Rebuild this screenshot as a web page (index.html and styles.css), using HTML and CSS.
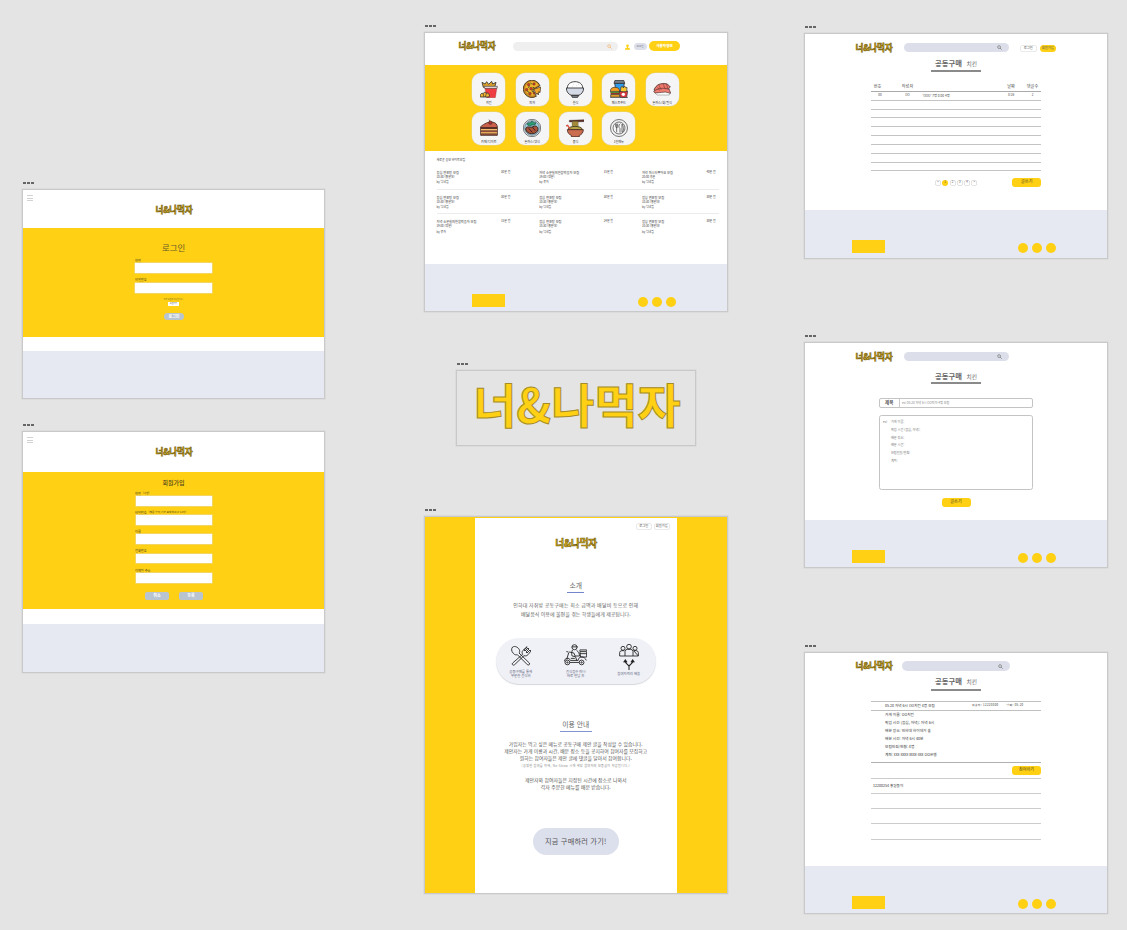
FILE: index.html
```html
<!DOCTYPE html>
<html lang="ko">
<head>
<meta charset="utf-8">
<title>너&amp;나먹자</title>
<link rel="stylesheet" href="styles.css">
</head>
<body>
<svg class="defs" aria-hidden="true">
  <symbol id="search" viewBox="0 0 12 12"><circle cx="5" cy="5" r="3.4" fill="none" stroke="currentColor" stroke-width="1.7"/><path d="M7.5 7.5 11 11" stroke="currentColor" stroke-width="2"/></symbol>
</svg>
<main class="canvas">

<section class="frame frame-login">
  <div class="dots"><i></i><i></i><i></i></div>
  <div class="board">
    <header class="auth-head"><div class="burger"><i></i><i></i><i></i></div><div class="logo">너&amp;나먹자</div></header>
    <form class="auth login">
      <h2 class="login-title">로그인</h2>
      <label>학번</label><div class="field"></div>
      <label>비밀번호</label><div class="field"></div>
      <p class="ask">아직 회원이 아니신가요?</p>
      <div class="join">회원가입</div>
      <div class="btn-grey">로그인</div>
    </form>
    <footer class="plain-foot"></footer>
  </div>
</section>

<section class="frame frame-signup">
  <div class="dots"><i></i><i></i><i></i></div>
  <div class="board">
    <header class="auth-head"><div class="burger"><i></i><i></i><i></i></div><div class="logo">너&amp;나먹자</div></header>
    <form class="auth signup">
      <h2 class="signup-title">회원가입</h2>
      <label>학번 <small>(사번)</small></label><div class="field"></div>
      <label>비밀번호 <small>(영문 숫자,기호 포함하여 8-12자)</small></label><div class="field"></div>
      <label>이름</label><div class="field"></div>
      <label>전화번호</label><div class="field"></div>
      <label class="mail">이메일 주소</label><div class="field"></div>
      <div class="actions"><div class="btn-grey">취소</div><div class="btn-grey">등록</div></div>
    </form>
    <footer class="plain-foot"></footer>
  </div>
</section>

<section class="frame frame-home">
  <div class="dots"><i></i><i></i><i></i></div>
  <div class="board">
    <header class="home-head">
      <div class="logo">너&amp;나먹자</div>
      <div class="search"><svg><use href="#search"/></svg></div>
      <svg class="user" viewBox="0 0 12 13"><circle cx="6" cy="3.4" r="3.2"/><path d="M4.5 6h3v2.4L12 10v3H0v-3l4.500-1.600z"/></svg>
      <div class="home-pill">로그인</div>
      <div class="home-cta">사용자정보</div>
    </header>
    <div class="menu">
      <div class="card"><svg viewBox="0 0 54 54"><path d="M10 22 6 7l9 5 5-7 6 8 9-9 3 8 10-5-4 15z" fill="#d9a02c" stroke="#333" stroke-width="2.500"/><path d="M14 21h37l-5 32H20z" fill="#ee3d43" stroke="#8d2d30"/><path d="M12 19h40l-1 6H14z" fill="#f7e9e4" stroke="#444" stroke-width="2"/><path d="M1 51c-2-9 4-13 9-10 2-6 8-5 8-1 6-3 13 3 9 11z" fill="#f4b632" stroke="#333" stroke-width="2.500"/><path d="m9 41 3 10m7-11-3 11" stroke="#333" stroke-width="2"/></svg><span>치킨</span></div>
      <div class="card"><svg viewBox="0 0 54 54"><path d="M51 17A26 26 0 1 0 40 49L29 29z" fill="#c88a22" stroke="#3b2b16" stroke-width="2.500"/><path d="M46 15A21 21 0 1 0 35 45L26 27z" fill="#f3b52b"/><path d="m32 28 21-7-2 17-4-3-1 10-4-6-2 4z" fill="#efa829" stroke="#3b2b16" stroke-width="2"/><g fill="#c43a2c" stroke="#453016"><circle cx="17" cy="14" r="4"/><circle cx="33" cy="12" r="4"/><circle cx="11" cy="29" r="4"/><circle cx="24" cy="26" r="4"/><circle cx="21" cy="41" r="4"/><circle cx="33" cy="40" r="3"/></g><path d="m23 8 3 5m-11 9 5-2m-7 14 5 3m11-15 5 1m-8 9 4 5" stroke="#38602b" stroke-width="3"/></svg><span>피자</span></div>
      <div class="card"><svg viewBox="0 0 54 54"><path d="M4 24C4 12 14 5 27 5s23 7 23 19" fill="#fff" stroke="#252525" stroke-width="2.500"/><path d="M1 24h52c0 12-7 19-15 22H16C8 43 1 36 1 24z" fill="#d5dae7" stroke="#252525" stroke-width="2.500"/><path d="M16 46h22l-3 6H19z" fill="#858b96" stroke="#252525" stroke-width="2.500"/><path d="M22 13h1m7 4h1m-13 3h1m17-7h1" stroke="#777" stroke-width="2"/></svg><span>한식</span></div>
      <div class="card"><svg viewBox="0 0 54 54"><path d="M14 9h29l-4 26H18z" fill="#2f9cec" stroke="#333" stroke-width="2.500"/><path d="M15 1h26l3 9H12z" fill="#76808c" stroke="#333" stroke-width="2.500"/><path d="M1 35c0-10 5-13 14-13s14 4 14 13z" fill="#f59c22" stroke="#333" stroke-width="2"/><path d="M2 34h27v5H2z" fill="#5c9a3d" stroke="#333"/><path d="M2 39h27v5H2z" fill="#92312a"/><path d="M2 44h27v7H2z" fill="#f3aa29" stroke="#333" stroke-width="2"/><path d="m31 35 2-14 4-2 3 5 4-6 3 5 4-1-1 14z" fill="#ffc830" stroke="#333" stroke-width="2"/><path d="M28 33c6 4 17 4 25 0l-3 19H31z" fill="#e33940" stroke="#333" stroke-width="2"/><circle cx="40" cy="43" r="5" fill="#fff"/><path d="M0 53h54" stroke="#333" stroke-width="2"/></svg><span>패스트푸드</span></div>
      <div class="card"><svg viewBox="0 0 54 54"><path d="M5 38c7-8 34-9 46 0l-2 7H12z" fill="#fff" stroke="#999" stroke-width="2"/><path d="M3 30C9 13 24 8 43 12l9 9-8 8-22 3-10 5z" fill="#ee766b" stroke="#4c3434" stroke-width="2.500"/><path d="M2 34c12-9 29-12 47-6l4 12-16-4-31 3z" fill="#f17c70" stroke="#4c3434" stroke-width="2"/><path d="m18 16 7 14m5-19 7 17m3-17 5 17m-31-6 6 10" stroke="#863f3b" stroke-width="2"/></svg><span>돈까스/회/일식</span></div>
      <div class="card"><svg viewBox="0 0 54 54"><path d="M2 23C13 13 26 8 36 9c10 1 16 7 16 15v25H2z" fill="#c9604c" stroke="#422a23" stroke-width="2.500"/><path d="M2 24h50v6H2z" fill="#5a3026"/><path d="M3 30h48v5H3z" fill="#f3bd70"/><path d="M3 39h48v6H3z" fill="#e8aa58"/><path d="M3 36h48m-48 9h48" stroke="#55342a" stroke-width="3"/><circle cx="31" cy="11" r="5" fill="#b82e37" stroke="#422a23" stroke-width="2"/><path d="m30 7-3-5" stroke="#333" stroke-width="2"/></svg><span>카페/디저트</span></div>
      <div class="card"><svg viewBox="0 0 54 54"><circle cx="27" cy="27" r="26" fill="#eef4f6" stroke="#353c40" stroke-width="2"/><circle cx="27" cy="27" r="22" fill="#9fd1e5" stroke="#50626a" stroke-width="2"/><path d="M8 30c3-12 14-2 22-7 10-6 19 3 13 13-6 12-32 12-35-6z" fill="#a85339" stroke="#39251f" stroke-width="3"/><path d="m17 28 11 12m0-16 9 11" stroke="#44241c" stroke-width="3"/><path d="M12 16c3-9 10-1 12-8 5-3 8 5 14 3 2 7-6 8-11 7-5 5-12 2-15-2z" fill="#2c9b72" stroke="#244c3d" stroke-width="2"/></svg><span>돈까스/양식</span></div>
      <div class="card"><svg viewBox="0 0 54 54"><path d="M10 4 54 2v6L10 9z" fill="#5d302c" stroke="#352321"/><path d="M19 7h17v27H19z" fill="#c0a041" stroke="#594e27" stroke-width="2"/><path d="M24 7v24m6-24v24" stroke="#69602f" stroke-width="2"/><path d="M6 32c0-13 43-13 43 0z" fill="#b7a247" stroke="#4d4927" stroke-width="3"/><path d="m0 21 5-2 8 13" fill="none" stroke="#d74c3c" stroke-width="4"/><path d="M4 32h48c0 10-7 16-12 17v4H16v-4C9 46 4 41 4 32z" fill="#c96c50" stroke="#4c2a23" stroke-width="2.500"/></svg><span>중식</span></div>
      <div class="card"><svg viewBox="0 0 54 54" fill="none" stroke="#333" stroke-width="2"><circle cx="27" cy="27" r="25.500"/><circle cx="27" cy="27" r="18"/><path d="M17 14v9c0 4 6 4 6 0v-9m-3 0v26m11-26c-6 3-5 13-1 15v12m6-26v25c6 0 5-20 0-25z" fill="#fff"/></svg><span>1인메뉴</span></div>
    </div>
    <div class="list">
      <h3>새로운 공모 바이트모임</h3>
      <div class="posts">
        <article><b>점심 연포탕 모집</b><em>30분 전</em><p>10:30 (홍문대)</p><p>by 닉네임</p></article>
        <article><b>저녁 소분실의한참먹을자 모집</b><em>15분 전</em><p>19:00 (정문)</p><p>by 유저</p></article>
        <article><b>저녁 파스타좋아요 모집</b><em>40분 전</em><p>20:00 후문</p><p>by 닉네임</p></article>
      </div>
      <div class="posts">
        <article><b>점심 연포탕 모집</b><em>30분 전</em><p>10:30 (홍문대)</p><p>by 닉네임</p></article>
        <article><b>점심 연포탕 모집</b><em>30분 전</em><p>10:30 (홍문대)</p><p>by 닉네임</p></article>
        <article><b>점심 연포탕 모집</b><em>30분 전</em><p>10:30 (홍문대)</p><p>by 닉네임</p></article>
      </div>
      <div class="posts last">
        <article><b>저녁 소분실의한참먹을자 모집</b><em>15분 전</em><p>19:00 (정문)</p><p>by 유저</p></article>
        <article><b>점심 연포탕 모집</b><em>24분 전</em><p>10:30 (홍문대)</p><p>by 닉네임</p></article>
        <article><b>점심 연포탕 모집</b><em>30분 전</em><p>10:30 (홍문대)</p><p>by 닉네임</p></article>
      </div>
    </div>
    <footer class="foot"><div class="box"></div><i></i><i></i><i></i></footer>
  </div>
</section>

<section class="frame frame-logo">
  <div class="dots"><i></i><i></i><i></i></div>
  <div class="board"><div class="big-logo">너&amp;나먹자</div></div>
</section>

<section class="frame frame-intro">
  <div class="dots"><i></i><i></i><i></i></div>
  <div class="board">
    <div class="intro">
      <div class="intro-nav"><span>로그인</span><span>회원가입</span></div>
      <div class="logo intro-logo">너&amp;나먹자</div>
      <h2 class="about">소개</h2>
      <p class="lead">인하대 자취방 공동구매는 최소 금액과 배달비 등으로 인해</p>
      <p class="lead lead-two">배달음식 이용에 불편을 겪는 학생들에게 제공됩니다.</p>
      <div class="features">
        <div><svg viewBox="0 0 60 60" fill="none" stroke="#222" stroke-width="2.600"><path d="M5 3c6-4 16 0 20 8 2 5 1 8-1 10l31 30c3 4-2 8-6 5L19 26c-4 1-8 1-12-4C1 16 0 8 5 3z"/><path d="m48 2-12 11c-4 4-3 8-1 12L5 51c-4 4 2 9 6 5l28-27c5 2 9 0 12-3l9-11-3-3-9 9-3-3 9-9-3-3-9 9-3-3 9-8z"/></svg><p>공동구매를 통해<br>무분한 음식비</p></div>
        <div><svg class="moto" viewBox="0 0 68 64" fill="none" stroke="#222" stroke-width="2.600"><circle cx="31" cy="9" r="7.500"/><path d="M23 8h18M25 17c-3 7-3 13-1 18l10 2 4 12m-1-31c7 5 8 9 9 17H33l-4-9-14-3M13 23l-6-1m7 3L8 45m-7 6c1-11 14-13 18-3h23c0-11 14-14 21-5l3 5M20 42h12m15-20h20v16H49zm0 6h20m-20-8v-3h20v3"/><circle cx="10" cy="54" r="7"/><circle cx="10" cy="54" r="2"/><circle cx="52" cy="54" r="7"/><circle cx="52" cy="54" r="2"/><path d="M17 54h28"/></svg><p>음식점수 떠나<br>바로 반납 후</p></div>
        <div><svg class="group" viewBox="0 0 60 78" fill="none" stroke="#222" stroke-width="2.600"><circle cx="12" cy="13" r="6"/><circle cx="30" cy="8" r="7"/><circle cx="48" cy="13" r="6"/><path d="M2 36V25q1-5 7-5h7m28 0h8q6 1 6 6v10zM18 36V22q1-6 7-6h10q6 0 7 6v14M2 36h56"/><path d="M30 78V66L19 55v-5m11 16 11-11v-5m-27 5 5-7 5 7m12 0 5-7 5 7" stroke-width="3.200"/></svg><p>참여자끼리 배송</p></div>
      </div>
      <h2 class="guide">이용 안내</h2>
      <p class="info i1">가입자는 먹고 싶은 메뉴로 공동구매 제안 글을 작성할 수 있습니다.</p>
      <p class="info i2">제안자는 가게 이름과 시간, 배분 장소 등을 공지하여 참여자를 모집하고</p>
      <p class="info i3">원하는 참여자들은 제안 글에 댓글을 달아서 참여합니다.</p>
      <p class="info note">(공정한 참여를 위해, No-Show 시에 해당 참여자의 보증금이 차감됩니다.)</p>
      <p class="info i4">제안자와 참여자들은 지정된 시간에 장소로 나와서</p>
      <p class="info i5">각자 주문한 메뉴를 배분 받습니다.</p>
      <div class="go">지금 구매하러 가기!</div>
    </div>
  </div>
</section>

<section class="frame frame-board">
  <div class="dots"><i></i><i></i><i></i></div>
  <div class="board shop">
    <header class="shop-head"><div class="logo">너&amp;나먹자</div><div class="search"><svg><use href="#search"/></svg></div><div class="nav"><span>로그인</span><span>회원가입</span></div></header>
    <h2 class="shop-title">공동구매<small>치킨</small></h2>
    <div class="table">
      <div class="tr th"><span>번호</span><span>작성자</span><span></span><span>날짜</span><span>댓글수</span></div>
      <div class="tr"><span>00</span><span>OO</span><span class="left">'OOO' 7명 0:00 4명</span><span>8/26</span><span>2</span></div>
      <div class="tr"></div><div class="tr"></div><div class="tr"></div><div class="tr"></div><div class="tr"></div><div class="tr"></div><div class="tr"></div><div class="tr"></div>
    </div>
    <div class="pager"><div class="pages"><span>&lt;</span><span class="on">1</span><span>2</span><span>3</span><span>4</span><span>&gt;</span></div><div class="btn">글쓰기</div></div>
    <footer class="foot"><div class="box"></div><i></i><i></i><i></i></footer>
  </div>
</section>

<section class="frame frame-write">
  <div class="dots"><i></i><i></i><i></i></div>
  <div class="board shop">
    <header class="shop-head"><div class="logo">너&amp;나먹자</div><div class="search"><svg><use href="#search"/></svg></div></header>
    <h2 class="shop-title">공동구매<small>치킨</small></h2>
    <div class="subject"><b>제목</b><span>ex) 05.20 저녁 6시 OO피자 4명 모집</span></div>
    <div class="body-box"><span>ex)</span><div><p>가게 이름:</p><p>픽업 시간 (점심, 저녁):</p><p>배분 장소:</p><p>배분 시간:</p><p>모집인원/현황:</p><p>계좌:</p></div></div>
    <div class="btn center">글쓰기</div>
    <footer class="foot"><div class="box"></div><i></i><i></i><i></i></footer>
  </div>
</section>

<section class="frame frame-detail">
  <div class="dots"><i></i><i></i><i></i></div>
  <div class="board shop">
    <header class="shop-head"><div class="logo">너&amp;나먹자</div><div class="search"><svg><use href="#search"/></svg></div></header>
    <h2 class="shop-title">공동구매<small>치킨</small></h2>
    <div class="post">
      <div class="post-head"><b>05.20 저녁 6시 OO치킨 4명 모집</b><span>작성자: 12220000</span><span>날짜: 05.20</span></div>
      <div class="post-body"><p>가게 이름: OO치킨</p><p>픽업 시간 (점심, 저녁): 저녁 6시</p><p>배분 장소: 인하대 하이데거 숲</p><p>배분 시간: 저녁 6시 40분</p><p>모집인원/현황: 4명</p><p>계좌: xxx-xxxx-xxxx-xxx OO은행</p></div>
      <div class="join-row"><div class="btn">참여하기</div></div>
      <div class="comment">12200254 홍길동이</div><div class="comment"></div><div class="comment"></div><div class="comment"></div>
    </div>
    <footer class="foot"><div class="box"></div><i></i><i></i><i></i></footer>
  </div>
</section>

</main>
</body>
</html>
```
FILE: styles.css
```css
* { box-sizing: border-box; }
body { margin: 0; background: #e4e4e4; font-family: "Noto Sans CJK KR", "Noto Sans", sans-serif; color: #555; }
h2, h3, p { margin: 0; font-weight: 400; }
i, em { font-style: normal; }
span, p, h2, h3, b, label { white-space: nowrap; }
.defs { position: absolute; width: 0; height: 0; }
.canvas { position: relative; width: 1127px; height: 930px; overflow: hidden; }

/* artboards placed on the free canvas */
.frame { position: absolute; display: flex; flex-direction: column; }
.frame-login { left: 22px; top: 182px; width: 303px; height: 217px; }
.frame-signup { left: 22px; top: 424px; width: 303px; height: 249px; }
.frame-home { left: 424px; top: 25px; width: 304px; height: 287px; }
.frame-logo { left: 456px; top: 363px; width: 240px; height: 83px; }
.frame-intro { left: 424px; top: 509px; width: 304px; height: 385px; }
.frame-board { left: 804px; top: 26px; width: 304px; height: 233px; }
.frame-write { left: 804px; top: 335px; width: 304px; height: 233px; }
.frame-detail { left: 804px; top: 645px; width: 304px; height: 269px; }
.dots { display: flex; gap: 1px; height: 7px; padding-left: 1px; }
.dots i { width: 3px; height: 2px; background: #666; }
.board { flex: 1; display: flex; flex-direction: column; border: 1px solid #c9c9c9; background: #fff; box-shadow: 0 0 0 .5px #d4d4d4; min-height: 0; }

.logo { width: 37px; height: 12px; line-height: 10.600px; font-size: 8.600px; font-weight: 700; letter-spacing: -.2px; color: #ecc012; -webkit-text-stroke: .6px #6f5a10; white-space: nowrap; }

/* login and signup */
.auth-head { height: 38px; display: flex; align-items: flex-start; padding: 5px 0 0 4px; }
.frame-signup .auth-head { height: 40px; }
.burger { width: 6px; display: flex; flex-direction: column; gap: 1px; }
.burger i { height: 1px; background: #d2d2d2; margin-bottom: .6px; }
.auth-head .logo { margin: 9px 0 0 122.500px; }
.auth { background: #ffd014; display: flex; flex-direction: column; padding-left: 112px; }
.login { height: 109px; }
.login-title { height: 12px; line-height: 12px; margin: 13px 0 1.500px 27px; font-size: 8.400px; color: #665a2b; }
.auth label { height: 4px; line-height: 4px; font-size: 3.200px; color: #55491d; }
.login label { margin-top: 4px; }
.login .field + label { margin-top: 5px; }
.field { width: 77px; height: 10px; background: #fff; box-shadow: 0 0 0 .5px #e5dab0; margin-top: .5px; }
.ask { width: 77px; margin-top: 5px; height: 3px; line-height: 3px; font-size: 1.900px; text-align: center; color: #6b5d25; }
.join { width: 11px; height: 4px; line-height: 4px; margin: 1px 0 0 33px; background: #fff; font-size: 2px; text-align: center; }
.btn-grey { background: #b8c4d0; color: #fff; font-weight: 700; text-align: center; border-radius: 4px; }
.login .btn-grey { width: 20px; height: 7px; line-height: 6.500px; margin: 7px 0 0 29px; font-size: 4px; }
.plain-foot { background: #e6e9f2; flex: 1; margin-top: 14px; }
.signup { height: 137px; }
.signup-title { height: 10px; line-height: 10px; margin: 5.500px 0 0 27.500px; font-size: 6px; font-weight: 500; color: #51471d; }
.signup label { margin-top: 4.600px; height: 4px; line-height: 4px; }
.signup .signup-title + label { margin-top: 3.700px; }
.signup label small { font-size: 2.700px; vertical-align: .6px; margin-left: 1px; }
.signup .mail { margin-top: 5.200px; }
.signup .mail + .field { margin-top: .7px; }
.signup .field { width: 76px; margin-left: .5px; height: 9.800px; margin-top: .8px; }
.actions { display: flex; gap: 10px; margin: 8.700px 0 0 10px; }
.signup .btn-grey { width: 24px; height: 8px; line-height: 7.500px; font-size: 4px; border-radius: 2px; }
.frame-signup .plain-foot { margin-top: 15px; }

/* home */
.home-head { height: 32px; display: flex; align-items: flex-start; padding: 7px 0 0 33.500px; }
.search { display: flex; align-items: center; justify-content: flex-end; height: 9px; border-radius: 5px; background: #dcdfea; color: #777; }
.search svg { width: 5px; height: 5px; }
.home-head .search { width: 105px; background: #efefef; color: #f5b675; margin: 1.500px 0 0 17.500px; padding-right: 6px; }
.user { width: 5px; height: 6px; fill: #ffd014; margin: 3.500px 0 0 7px; }
.home-pill { width: 13px; height: 7px; line-height: 6.500px; border-radius: 4px; margin: 3px 0 0 3.500px; background: #dcdfea; font-size: 2.500px; text-align: center; }
.home-cta { width: 31px; height: 10px; line-height: 9.500px; border-radius: 5px; margin: 1px 0 0 2.500px; background: #ffd014; color: #fff; font-size: 3.600px; font-weight: 900; text-align: center; }
.menu { height: 86px; background: #ffd014; display: grid; grid-template-columns: repeat(5, 33px); gap: 6px 10.350px; padding: 8px 0 0 47.300px; align-content: start; }
.card { height: 33px; border-radius: 9px; background: #f5f5f5; box-shadow: 0 0 0 .5px #e3d28c; display: flex; flex-direction: column; align-items: center; }
.card svg { width: 18px; height: 18px; margin-top: 7px; }
.card span { height: 5px; line-height: 5px; margin-top: 2px; font-size: 3.100px; color: #333; }
.list { height: 113px; padding: 7px 0 0 11.500px; color: #3c3c3c; }
.list h3 { height: 5px; line-height: 5px; font-size: 2.950px; }
.posts { width: 282px; display: grid; grid-template-columns: repeat(3, 102.700px); height: 24.500px; padding-top: 0; border-bottom: 1px solid #ececec; }
.list h3 + .posts { margin-top: 7px; height: 19.500px; }
.posts:nth-of-type(2) { padding-top: 5.500px; }
.posts.last { padding-top: 5px; border: 0; }
.posts article { display: grid; grid-template-columns: 64.500px 1fr; grid-template-rows: 5px 5px 5.500px; line-height: 5px; }
.posts.last article { grid-template-rows: 5px 6px 6px; }
.posts b, .posts em { font-weight: 400; font-size: 3.200px; white-space: nowrap; }
.posts em { font-size: 2.900px; }
.posts p { grid-column: 1 / 3; font-size: 2.900px; line-height: 5.500px; }
.foot { flex: 1; background: #e6e9f2; display: flex; padding: 30px 0 0 47px; }
.foot .box { width: 33px; height: 13px; background: #ffd014; margin-right: 133.300px; }
.foot i { width: 10px; height: 10px; border-radius: 50%; background: #ffd014; margin: 3px 3.800px 0 0; }

/* wordmark */
.frame-logo .board { background: transparent; align-items: center; }
.big-logo { margin-left: 2px; font-size: 47px; line-height: 63px; font-weight: 700; color: #ffd014; -webkit-text-stroke: 1px #a58c27; white-space: nowrap; }

/* introduction */
.frame-intro .board { background: #ffd014; }
.intro { width: 201.500px; height: 375px; margin: 1px 0 0 50px; background: #fff; display: flex; flex-direction: column; align-items: center; }
.intro-nav { align-self: flex-end; display: flex; gap: 1.500px; margin: 4.500px 6.500px 0 0; }
.intro-nav span, .nav span { width: 16.500px; height: 7px; line-height: 6px; border-radius: 4px; box-shadow: inset 0 0 0 .5px #d8d8d8; text-align: center; font-size: 3.300px; }
.intro-logo { width: 41px; height: 14px; line-height: 13px; font-size: 9.700px; margin-top: 7.500px; }
.about { width: 17px; height: 12px; line-height: 9px; margin-top: 30px; border-bottom: 1px solid #7386cb; font-size: 6.800px; text-align: center; color: #666; }
.lead { height: 9px; line-height: 9px; margin-top: 7px; font-size: 5px; letter-spacing: .16px; color: #666; }
.lead-two { margin-top: 0; letter-spacing: 0; }
.features { width: 160px; height: 46px; margin-top: 20px; border-radius: 23px; background: #f0f1f6; box-shadow: 0 1px 1px #d5d6db; display: grid; grid-template-columns: 50px 60px 46px; }
.features div { display: flex; flex-direction: column; align-items: center; }
.features svg { width: 20px; height: 20px; margin-top: 8px; }
.features .moto { width: 23px; height: 22px; margin-top: 6px; }
.features .group { width: 20px; height: 26px; margin-top: 5.500px; }
.features p { margin-top: 4px; font-size: 3.400px; line-height: 4.200px; text-align: center; color: #59617d; }
.features .group + p { margin-top: 2.500px; }
.guide { width: 32px; height: 12px; line-height: 9.500px; margin-top: 36px; border-bottom: 1px solid #8294cf; font-size: 6.800px; text-align: center; color: #666; }
.info { height: 7px; line-height: 7px; font-size: 4.500px; color: #555; }
.i1 { margin-top: 8px; font-size: 4.850px; }
.i2 { font-size: 4.850px; }
.i3 { font-size: 4.850px; }
.note { margin-top: 1px; font-size: 3.100px; letter-spacing: .3px; color: #888; }
.i4 { margin-top: 6.500px; font-size: 4.900px; }
.i5 { font-size: 4.900px; }
.go { width: 86px; height: 27px; line-height: 26px; margin-top: 38px; border-radius: 14px; background: #dcdfec; font-size: 7.200px; letter-spacing: .2px; text-align: center; }

/* group purchase pages */
.shop-head { height: 22px; display: flex; align-items: flex-start; padding: 7.500px 0 0 50.500px; }
.shop-head .search { width: 105px; margin: 1.500px 0 0 11px; padding-right: 7px; }
.frame-detail .shop-head { padding-top: 7px; }
.frame-detail .search { width: 108px; height: 10px; margin: 1px 0 0 9.500px; }
.nav { display: flex; gap: 3px; margin: 3.500px 0 0 11.500px; }
.nav span + span { background: #ffd014; box-shadow: none; }
.shop-title { align-self: center; width: 50px; height: 15.500px; line-height: 13.500px; margin-top: 0; font-size: 7.300px; font-weight: 700; color: #666; text-align: center; border-bottom: 2px solid #8a8a8a; }
.shop-title small { font-size: 5.700px; font-weight: 400; margin-left: 4.500px; }
.frame-write .shop-title { margin-top: 4.500px; height: 14.500px; line-height: 13.500px; }
.frame-board .shop-title { margin-top: .5px; }
.shop .foot { flex: 0 0 48px; margin-top: auto; }
.frame-detail .foot, .frame-write .foot { flex-basis: 47px; }
.table { width: 170px; margin: 11px 0 0 66px; }
.tr { height: 8.830px; border-bottom: 1px solid #c4c4c4; display: grid; grid-template-columns: 18px 37px 75px 20px 20px; line-height: 7.800px; font-size: 3px; text-align: center; color: #444; }
.th { font-size: 4.100px; height: 9px; border-color: #aaa; }
.th span:first-child { padding-right: 5px; }
.tr .left { text-align: left; padding-left: 0; margin-left: -3.500px; font-size: 3.200px; }
.tr span:last-child { padding-left: 3px; }
.pager { height: 9px; display: flex; align-items: center; margin: 7px 0 0 130px; }
.pages { display: flex; gap: 1.250px; margin-right: 35px; }
.pages span { width: 6px; height: 6px; line-height: 5.500px; border-radius: 50%; box-shadow: inset 0 0 0 .5px #ccc; text-align: center; font-size: 2.800px; }
.pages .on { background: #ffd014; box-shadow: none; }
.btn { width: 29px; height: 9px; line-height: 7.500px; border-radius: 3px; background: #ffd014; text-align: center; font-size: 4.100px; color: #4b431f; }
.subject { width: 154px; height: 10px; margin: 13.500px 0 0 74px; border: 1px solid #c4c4c4; border-radius: 2px; display: flex; line-height: 7.500px; font-size: 3.050px; color: #888; }
.subject b { width: 19.500px; border-right: 1px solid #ccc; text-align: center; font-size: 4.500px; color: #555; margin-right: 2.500px; }
.body-box { width: 154px; height: 75.500px; margin: 7px 0 0 74px; padding: 2.500px 3px; border: 1px solid #c4c4c4; border-radius: 2.500px; display: flex; font-size: 3.100px; line-height: 7.750px; color: #777; }
.body-box span { width: 8px; }
.btn.center { align-self: center; margin-top: 8px; }
.post { width: 170px; margin: 10px 0 0 66px; color: #333; }
.post-head { height: 10px; border: 1px solid #c0c0c0; border-width: 1px 0; display: flex; padding-left: 14px; line-height: 7px; font-size: 2.850px; letter-spacing: .35px; }
.post-head b { width: 88px; font-size: 3.600px; letter-spacing: 0; font-weight: 400; }
.post-head span { width: 35px; }
.post-body { height: 52px; padding: .8px 0 0 14px; border-bottom: 1.500px solid #b0b0b0; font-size: 3.700px; line-height: 8px; }
.join-row { height: 16px; display: flex; justify-content: flex-end; padding-top: 3px; border-bottom: 1px solid #ccc; }
.comment { height: 15.250px; border-bottom: 1px solid #ccc; line-height: 13.500px; padding-left: 2px; font-size: 3.600px; }
```
